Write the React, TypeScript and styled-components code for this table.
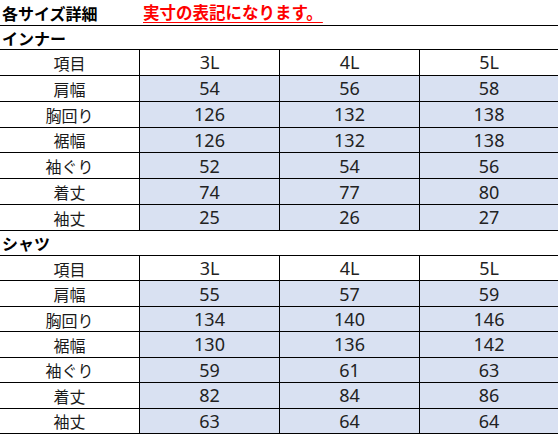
import React from 'react';
import styled, { createGlobalStyle } from 'styled-components';

interface SizeRow {
  label: string;
  values: number[];
}

interface Section {
  name: string;
  rowHeight: number;
  rows: SizeRow[];
}

const sizes = ['3L', '4L', '5L'];

const sections: Section[] = [
  {
    name: 'インナー',
    rowHeight: 25.85,
    rows: [
      { label: '肩幅', values: [54, 56, 58] },
      { label: '胸回り', values: [126, 132, 138] },
      { label: '裾幅', values: [126, 132, 138] },
      { label: '袖ぐり', values: [52, 54, 56] },
      { label: '着丈', values: [74, 77, 80] },
      { label: '袖丈', values: [25, 26, 27] },
    ],
  },
  {
    name: 'シャツ',
    rowHeight: 25.45,
    rows: [
      { label: '肩幅', values: [55, 57, 59] },
      { label: '胸回り', values: [134, 140, 146] },
      { label: '裾幅', values: [130, 136, 142] },
      { label: '袖ぐり', values: [59, 61, 63] },
      { label: '着丈', values: [82, 84, 86] },
      { label: '袖丈', values: [63, 64, 64] },
    ],
  },
];

export default function App() {
  return (
    <>
      <GlobalStyle />
      <Page>
        <TitleRow>
          <Title>各サイズ詳細</Title>
          <Note>実寸の表記になります。</Note>
        </TitleRow>
        {sections.map((section) => (
          <div key={section.name}>
            <SectionRow $first={section === sections[0]}>{section.name}</SectionRow>
            <Grid $rowHeight={section.rowHeight}>
              <Cell $label>項目</Cell>
              {sizes.map((size, i) => (
                <Cell key={size} $last={i === sizes.length - 1}>
                  <Num>{size}</Num>
                </Cell>
              ))}
              {section.rows.map((row) => (
                <React.Fragment key={row.label}>
                  <Cell $label>{row.label}</Cell>
                  {row.values.map((v, i) => (
                    <Cell key={i} $filled $last={i === row.values.length - 1}>
                      <Num>{v}</Num>
                    </Cell>
                  ))}
                </React.Fragment>
              ))}
            </Grid>
          </div>
        ))}
      </Page>
    </>
  );
}

const GlobalStyle = createGlobalStyle`
  html, body {
    margin: 0;
    padding: 0;
    background: #ffffff;
  }
  body {
    font-family: "Noto Sans CJK JP", "Noto Sans", sans-serif;
    color: #000;
  }
`;

const Page = styled.div`
  width: 558px;
  height: 436px;
  overflow: hidden;
`;

const TitleRow = styled.div`
  height: 26px;
  box-sizing: border-box;
  border-bottom: 1px solid #000;
  display: flex;
  align-items: center;
  padding-left: 2px;
`;

const Title = styled.span`
  width: 141px;
  font-size: 16px;
  font-weight: 700;
  line-height: 1;
`;

const Note = styled.span`
  font-size: 16.5px;
  font-weight: 700;
  color: #ff0000;
  line-height: 1;
  text-decoration: underline;
  text-underline-offset: 3px;
  text-decoration-thickness: 1px;
`;

const SectionRow = styled.div<{ $first?: boolean }>`
  height: ${(p) => (p.$first ? 24 : 25)}px;
  box-sizing: border-box;
  border-bottom: 1px solid #000;
  display: flex;
  align-items: center;
  padding-left: 2px;
  font-size: 16px;
  font-weight: 700;
  line-height: 1;
`;

const Grid = styled.div<{ $rowHeight: number }>`
  display: grid;
  grid-template-columns: 140px 140px 140px 1fr;
  grid-auto-rows: ${(p) => p.$rowHeight}px;
`;

const Cell = styled.div<{ $filled?: boolean; $label?: boolean; $last?: boolean }>`
  box-sizing: border-box;
  border-bottom: 1px solid #000;
  border-right: ${(p) => (p.$last ? 'none' : '1px solid #000')};
  background: ${(p) => (p.$filled ? '#d9e1f2' : '#ffffff')};
  display: flex;
  align-items: center;
  justify-content: center;
  font-size: 16px;
  line-height: 1;
  color: #1a1a1a;
  padding-top: ${(p) => (p.$label ? 1 : 0)}px;
`;

const Num = styled.span`
  font-family: "Noto Sans", "Open Sans", sans-serif;
  font-size: 18px;
  line-height: 1;
  color: #222222;
`;
